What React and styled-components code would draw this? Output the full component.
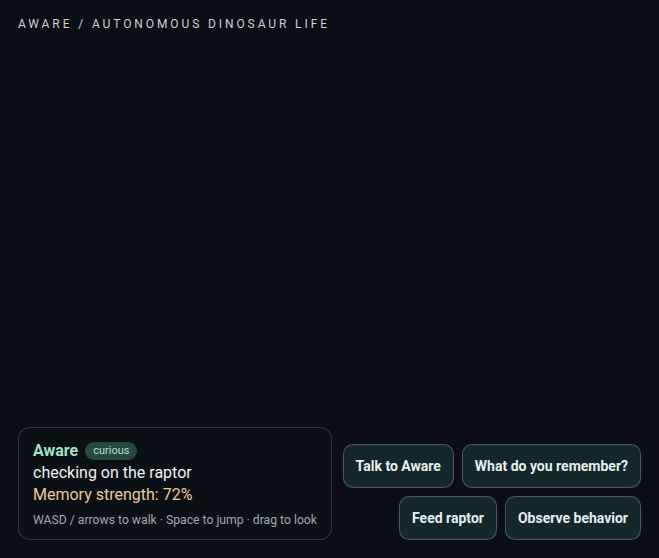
import React from "react";
import styled, { createGlobalStyle } from "styled-components";

const Global = createGlobalStyle`
  html, body, #root { margin: 0; height: 100%; }
  body {
    background: #0b0f15;
    font-family: Roboto, "Liberation Sans", sans-serif;
    color: #e8eef2;
    overflow: hidden;
  }
`;

const Page = styled.div`
  height: 100vh;
  display: flex;
  flex-direction: column;
  box-sizing: border-box;
  padding: 18px;
`;

const Title = styled.div`
  font-size: 12px;
  letter-spacing: 2.9px;
  text-transform: uppercase;
  color: #c9d1d9;
  line-height: 14px;
  margin-top: -1px;
`;

const Stage = styled.div`
  flex: 1;
`;

const BottomBar = styled.div`
  display: flex;
  justify-content: space-between;
  align-items: flex-end;
  gap: 8px;
`;

const Card = styled.div`
  flex-shrink: 0;
  border: 1px solid rgba(190, 210, 220, 0.22);
  border-radius: 12px;
  background: #0a1016;
  padding: 12px 14px 11px;
`;

const NameRow = styled.div`
  display: flex;
  align-items: center;
  gap: 7px;
  line-height: 22px;
`;

const Name = styled.span`
  font-weight: 700;
  font-size: 16px;
  color: #a3e3c6;
`;

const Badge = styled.span`
  font-size: 11px;
  line-height: 16px;
  padding: 1px 8px;
  border-radius: 10px;
  background: #264a42;
  color: #b7ddd0;
`;

const Line = styled.div`
  font-size: 16px;
  line-height: 22px;
  color: ${(p) => p.$color || "#eef2f5"};
`;

const Hint = styled.div`
  margin-top: 6px;
  font-size: 12.2px;
  line-height: 16px;
  color: #a0a8b0;
  white-space: nowrap;
`;

const Actions = styled.div`
  flex: 0 0 300px;
  display: flex;
  flex-wrap: wrap;
  justify-content: flex-end;
  gap: 8px;
`;

const Action = styled.button`
  height: 44px;
  padding: 0 12px;
  border-radius: 10px;
  border: 1px solid rgba(170, 205, 205, 0.32);
  background: #15272a;
  color: #e6f0f0;
  font-family: inherit;
  font-size: 14px;
  font-weight: 700;
  cursor: pointer;
`;

const actions = ["Talk to Aware", "What do you remember?", "Feed raptor", "Observe behavior"];

export default function App() {
  return (
    <>
      <Global />
      <Page>
        <Title>Aware / Autonomous Dinosaur Life</Title>
        <Stage />
        <BottomBar>
          <Card>
            <NameRow>
              <Name>Aware</Name>
              <Badge>curious</Badge>
            </NameRow>
            <Line>checking on the raptor</Line>
            <Line $color="#ecc99b">Memory strength: 72%</Line>
            <Hint>WASD / arrows to walk · Space to jump · drag to look</Hint>
          </Card>
          <Actions>
            {actions.map((a) => (
              <Action key={a}>{a}</Action>
            ))}
          </Actions>
        </BottomBar>
      </Page>
    </>
  );
}
